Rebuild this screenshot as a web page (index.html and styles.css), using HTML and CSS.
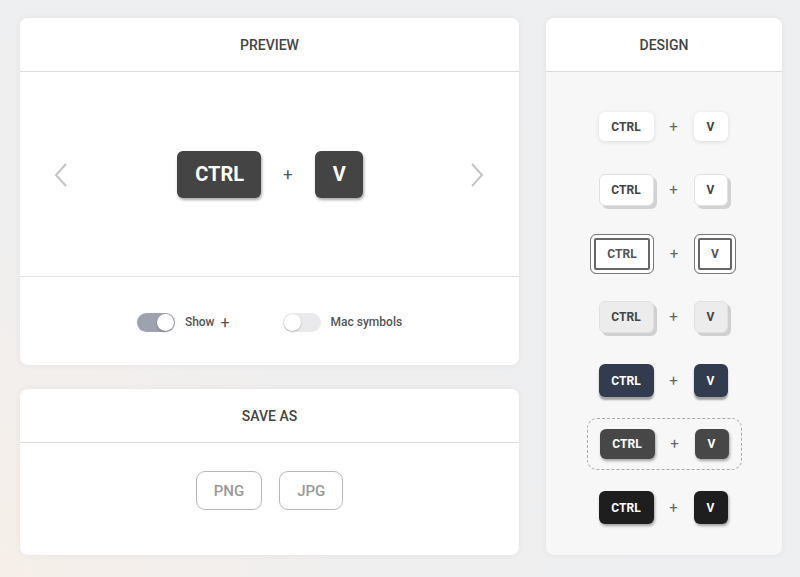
FILE: index.html
```html
<!DOCTYPE html>
<html lang="en">
<head>
    <meta charset="UTF-8">
    <title>Keyboard shortcut image</title>
    <link rel="stylesheet" href="styles.css">
</head>
<body>
    <div class="app">
        <div class="left">
            <section class="card preview">
                <div class="card-head">PREVIEW</div>
                <div class="stage">
                    <button class="arrow"><svg width="16" height="26" viewBox="0 0 16 26"><path d="M13 2 L3 13 L13 24" fill="none" stroke="#c4c4c4" stroke-width="2"/></svg></button>
                    <div class="combo">
                        <span class="key big">CTRL</span>
                        <span class="plus">+</span>
                        <span class="key big">V</span>
                    </div>
                    <button class="arrow"><svg width="16" height="26" viewBox="0 0 16 26"><path d="M3 2 L13 13 L3 24" fill="none" stroke="#c4c4c4" stroke-width="2"/></svg></button>
                </div>
                <div class="options">
                    <label class="option"><span class="toggle on"><i></i></span>Show <span class="plus-sm">+</span></label>
                    <label class="option"><span class="toggle"><i></i></span>Mac symbols</label>
                </div>
            </section>
            <section class="card save">
                <div class="card-head">SAVE AS</div>
                <div class="save-body">
                    <button class="fmt">PNG</button>
                    <button class="fmt">JPG</button>
                </div>
            </section>
        </div>
        <section class="card design">
            <div class="card-head">DESIGN</div>
            <div class="design-list">
                <div class="slot"><div class="row d1"><span class="k w">CTRL</span><span class="p">+</span><span class="k">V</span></div></div>
                <div class="slot"><div class="row d2"><span class="k w">CTRL</span><span class="p">+</span><span class="k">V</span></div></div>
                <div class="slot"><div class="row d3"><span class="k w">CTRL</span><span class="p">+</span><span class="k">V</span></div></div>
                <div class="slot"><div class="row d4"><span class="k w">CTRL</span><span class="p">+</span><span class="k">V</span></div></div>
                <div class="slot"><div class="row d5"><span class="k w">CTRL</span><span class="p">+</span><span class="k">V</span></div></div>
                <div class="slot"><div class="row d6 selected"><span class="k w">CTRL</span><span class="p">+</span><span class="k">V</span></div></div>
                <div class="slot"><div class="row d7"><span class="k w">CTRL</span><span class="p">+</span><span class="k">V</span></div></div>
            </div>
        </section>
    </div>
</body>
</html>
```

FILE: styles.css
```css
* {
    box-sizing: border-box;
}

body {
    margin: 0;
    height: 577px;
    overflow: hidden;
    font-family: Roboto, "Liberation Sans", sans-serif;
    background: radial-gradient(circle at 0% 100%, #f6efe9 0, #efeff0 40%, #eeeff1 100%);
    color: #444;
}

.app {
    display: flex;
    gap: 27px;
    padding: 18px 0 0 20px;
}

.left {
    display: flex;
    flex-direction: column;
    gap: 24px;
    width: 499px;
}

.card {
    background: #fff;
    border-radius: 8px;
    box-shadow: 0 0 6px rgba(0, 0, 0, 0.06);
    overflow: hidden;
}

.card-head {
    height: 54px;
    display: flex;
    align-items: center;
    justify-content: center;
    font-size: 14px;
    font-weight: 500;
    color: #444;
    border-bottom: 1px solid #dcdcdc;
    background: #fff;
}

.preview {
    height: 347px;
}

.stage {
    height: 205px;
    display: flex;
    align-items: center;
    justify-content: space-between;
    padding: 0 32px 0 33px;
    border-bottom: 1px solid #e2e2e2;
}

.arrow {
    border: 0;
    background: none;
    padding: 0;
    width: 18px;
    display: flex;
    margin-top: 1px;
}

.combo {
    display: flex;
    align-items: center;
}

.key.big {
    background: #444;
    color: #fff;
    font-weight: 700;
    font-size: 20px;
    height: 47px;
    border-radius: 6px;
    display: flex;
    align-items: center;
    justify-content: center;
    box-shadow: 1px 2px 3px rgba(0, 0, 0, 0.35);
    min-width: 46px;
    padding: 0 17px 0 18px;
}

.plus {
    font-size: 17px;
    color: #555;
    margin: 0 22px 0 22px;
}

.options {
    height: 88px;
    display: flex;
    align-items: center;
    justify-content: center;
    gap: 53px;
    padding-top: 2px;
}

.option {
    display: flex;
    align-items: center;
    font-size: 12px;
    font-weight: 500;
    color: #555;
}

.toggle {
    width: 38px;
    height: 19px;
    border-radius: 10px;
    background: #eaeaec;
    margin-right: 10px;
    position: relative;
}

.toggle i {
    position: absolute;
    top: 1px;
    left: 1px;
    width: 17px;
    height: 17px;
    border-radius: 50%;
    background: #fff;
    box-shadow: 0 1px 2px rgba(0, 0, 0, 0.25);
}

.toggle.on {
    background: #9ea1ae;
}

.toggle.on i {
    left: 20px;
}

.plus-sm {
    font-size: 16px;
    font-weight: 400;
    margin-left: 6px;
    color: #555;
}

.save {
    height: 166px;
}

.save-body {
    display: flex;
    justify-content: center;
    gap: 17px;
    padding-top: 28px;
}

.fmt {
    font-family: Roboto, "Liberation Sans", sans-serif;
    height: 39px;
    border: 1px solid #b8b8b8;
    background: #fff;
    border-radius: 9px;
    color: #999;
    font-size: 15px;
    font-weight: 500;
    padding: 0 17px;
}

.design {
    width: 236px;
    height: 537px;
    background: #f7f7f7;
}

.design-list {
    display: flex;
    flex-direction: column;
    padding-top: 23px;
}

.slot {
    height: 63.5px;
    display: flex;
    align-items: center;
    justify-content: center;
}

.row {
    display: flex;
    align-items: center;
    padding-right: 2px;
}

.k {
    height: 30px;
    width: 34px;
    border-radius: 6px;
    display: flex;
    align-items: center;
    justify-content: center;
    font-size: 12px;
    font-weight: 700;
    color: #444;
}

.k.w {
    width: 55px;
}

.p {
    width: 40px;
    text-align: center;
    font-size: 15px;
    color: #666;
}

.d1 .k {
    background: #fff;
    height: 29px;
    box-shadow: 0 1px 4px rgba(0, 0, 0, 0.12);
}

.d2 .k {
    background: #fff;
    border: 1px solid #e0e0e0;
    box-shadow: 3px 3px 0 #d2d2d2;
    height: 32px;
}

.d3 .k {
    background: #fff;
    border: 1px solid #777;
    box-shadow: inset 0 0 0 3px #fff, inset 0 0 0 5px #666;
    height: 40px;
    width: 42px;
    color: #555;
}

.d3 .k.w {
    width: 64px;
}

.d4 .k {
    background: #ececec;
    border: 1px solid #e0e0e0;
    box-shadow: 3px 3px 0 #d0d0d0;
    height: 32px;
}

.d5 .k {
    background: #333b4e;
    color: #fff;
    height: 33px;
    box-shadow: 0 3px 2px rgba(0, 0, 0, 0.35);
}

.d6 {
    border: 1px dashed #a9a9a9;
    border-radius: 10px;
    height: 52px;
    padding: 0 12px;
}

.d6 .k {
    background: #474747;
    color: #fff;
    height: 30px;
    box-shadow: 1px 2px 3px rgba(0, 0, 0, 0.35);
}

.d7 .k {
    background: #1e1e1e;
    color: #fff;
    height: 33px;
    box-shadow: 1px 2px 3px rgba(0, 0, 0, 0.35);
}
```
